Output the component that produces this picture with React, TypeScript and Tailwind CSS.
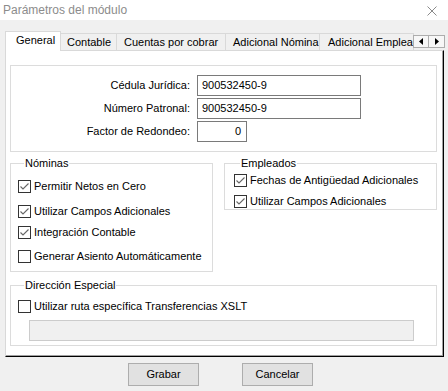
import React from 'react';

function Check({ checked }: { checked?: boolean }) {
  return (
    <span className="w-[13px] h-[13px] border border-[#333] bg-white flex items-center justify-center shrink-0">
      {checked && (
        <svg width="11" height="11" viewBox="0 0 11 11">
          <path d="M1.5 5.5 L4 8 L9.5 2.5" stroke="#666" strokeWidth="1.1" fill="none" />
        </svg>
      )}
    </span>
  );
}

function CheckRow({ label, checked, className = '' }: { label: string; checked?: boolean; className?: string }) {
  return (
    <div className={`flex items-center h-[13px] gap-[3px] ${className}`}>
      <Check checked={checked} />
      <span className="leading-[13px] whitespace-nowrap">{label}</span>
    </div>
  );
}

const tabs = [
  { name: 'Contable', w: 'w-[56px] pl-[6px]' },
  { name: 'Cuentas por cobrar', w: 'w-[109px] pl-[7px]' },
  { name: 'Adicional Nómina', w: 'w-[94px] pl-[7px]' },
  { name: 'Adicional Empleados', w: 'w-[94px] pl-[8px]' },
];

export default function App() {
  return (
    <div className="w-[448px] h-[391px] bg-[#f0f0f0] overflow-hidden text-[11px] text-[#000] font-['Segoe_UI','Liberation_Sans',Arial,sans-serif]">
      {/* title bar */}
      <div className="h-[20px] bg-white flex items-center justify-between pl-[3px] pr-[11px]">
        <span className="text-[12px] text-[#8c8c8c] leading-[20px]">Parámetros del módulo</span>
        <svg width="10" height="10" viewBox="0 0 10 10" className="mt-[1px]">
          <path d="M0.5 0.5 L9.5 9.5 M9.5 0.5 L0.5 9.5" stroke="#8a8a8a" strokeWidth="1" />
        </svg>
      </div>

      {/* tabs */}
      <div className="mt-[11px] flex items-end pl-[5px] h-[19px]">
        <div className="relative z-10 -mb-px h-[20px] w-[56px] bg-white border border-b-0 border-[#d9d9d9] pl-[10px] leading-[17px]">
          General
        </div>
        {tabs.map((t) => (
          <div
            key={t.name}
            className={`h-[17px] ${t.w} border-t border-r border-[#d9d9d9] bg-[#f0f0f0] leading-[16px] overflow-hidden whitespace-nowrap shrink-0`}
          >
            {t.name}
          </div>
        ))}
        <div className="flex self-end mb-[2px] shrink-0 -ml-px relative z-10">
          <div className="w-[16px] h-[13px] border border-[#adadad] bg-[#f7f7f7] flex items-center justify-center">
            <svg width="4" height="7" viewBox="0 0 4 7"><path d="M4 0 L0 3.5 L4 7 Z" fill="#000" /></svg>
          </div>
          <div className="w-[16px] h-[13px] border border-l-0 border-[#adadad] bg-[#f7f7f7] flex items-center justify-center">
            <svg width="4" height="7" viewBox="0 0 4 7"><path d="M0 0 L4 3.5 L0 7 Z" fill="#000" /></svg>
          </div>
        </div>
      </div>

      {/* tab panel */}
      <div className="ml-[5px] w-[439px] h-[307px] bg-white border-t border-l border-[#d9d9d9] border-r-[#000] border-b-[#000] border-r border-b shadow-[inset_-1px_-1px_0_#a0a0a0] pt-[14px] pl-[4px]">
        {/* id group */}
        <div className="w-[427px] border border-[#dcdcdc] pt-[9px] pb-[9px] grid grid-cols-[179px_auto] gap-x-[7px] gap-y-[2px] items-center">
          <span className="text-right">Cédula Jurídica:</span>
          <div className="w-[164px] h-[21px] border border-[#7a7a7a] pl-[4px] leading-[19px]">900532450-9</div>
          <span className="text-right">Número Patronal:</span>
          <div className="w-[164px] h-[21px] border border-[#7a7a7a] pl-[4px] leading-[19px]">900532450-9</div>
          <span className="text-right">Factor de Redondeo:</span>
          <div className="w-[50px] h-[21px] border border-[#7a7a7a] pr-[5px] text-right leading-[19px]">0</div>
        </div>

        <div className="mt-[4px] w-[427px] flex items-start justify-between">
          <fieldset className="w-[203px] border border-[#dcdcdc] pl-[7px] pb-[8px]">
            <legend className="ml-[6px] px-[1px] leading-[14px]">Nóminas</legend>
            <CheckRow className="mt-[10px]" checked label="Permitir Netos en Cero" />
            <CheckRow className="mt-[12px]" checked label="Utilizar Campos Adicionales" />
            <CheckRow className="mt-[8px]" checked label="Integración Contable" />
            <CheckRow className="mt-[11px]" label="Generar Asiento Automáticamente" />
          </fieldset>
          <fieldset className="w-[213px] border border-[#dcdcdc] pl-[9px] pb-[1px]">
            <legend className="ml-[6px] px-[1px] leading-[14px]">Empleados</legend>
            <CheckRow className="mt-[4px]" checked label="Fechas de Antigüedad Adicionales" />
            <CheckRow className="mt-[8px]" checked label="Utilizar Campos Adicionales" />
          </fieldset>
        </div>

        <fieldset className="mt-[6px] w-[427px] border border-[#dcdcdc] pl-[7px] pb-[4px]">
          <legend className="ml-[6px] px-[1px] leading-[14px]">Dirección Especial</legend>
          <CheckRow className="mt-[8px]" label="Utilizar ruta específica Transferencias XSLT" />
          <div className="mt-[7px] ml-[11px] w-[385px] h-[21px] border border-[#cccccc] bg-[#f0f0f0]" />
        </fieldset>
      </div>

      {/* buttons */}
      <div className="mt-[6px] flex pl-[128px] gap-[43px]">
        <button className="w-[71px] h-[23px] bg-[#e1e1e1] border border-[#adadad] text-[11px]">Grabar</button>
        <button className="w-[71px] h-[23px] bg-[#e1e1e1] border border-[#adadad] text-[11px]">Cancelar</button>
      </div>
    </div>
  );
}
